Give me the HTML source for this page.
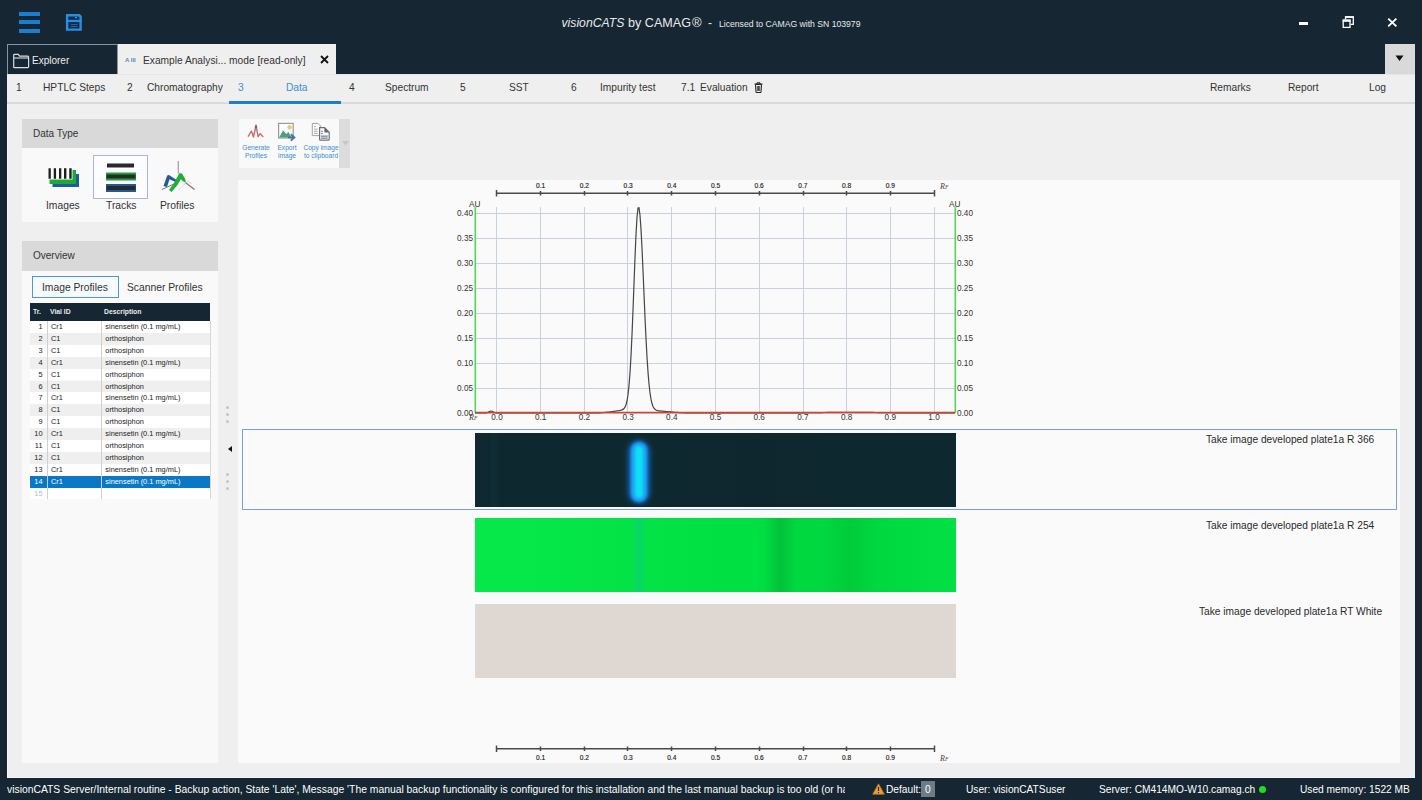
<!DOCTYPE html>
<html><head><meta charset="utf-8">
<style>
*{box-sizing:border-box;margin:0;padding:0}
html,body{width:1422px;height:800px;overflow:hidden;background:#162632;font-family:"Liberation Sans",sans-serif;color:#333}
.a{position:absolute;white-space:nowrap}
#titlebar{left:0;top:0;width:1422px;height:44px;background:#162632}
#nav{left:7px;top:74px;width:1408px;height:28px;background:#efefef}
#navline{left:7px;top:102px;width:1408px;height:2px;background:#d9d9d9}
#content{left:7px;top:104px;width:1408px;height:674px;background:#efefef}
.nt{font-size:10.2px;color:#333;top:82px;line-height:12px}
.ph{background:#d9d9d9;font-size:10px;color:#333;padding-left:11px;line-height:28px}
.pb{background:#f9f9f9}
.lbl{font-size:10.3px;color:#333;line-height:12px}
.tr{position:absolute;left:30px;width:180px;height:11.9px}
.tr span{position:absolute;font-size:7.4px;line-height:12.6px;color:#222}
.st{font-size:10.2px;color:#fff;top:783px;line-height:13px}
</style></head><body>
<div id="titlebar" class="a"></div>
<!-- hamburger -->
<div class="a" style="left:19px;top:12px;width:21px;height:4px;background:#1a7fd0"></div>
<div class="a" style="left:19px;top:20.3px;width:21px;height:4px;background:#1a7fd0"></div>
<div class="a" style="left:19px;top:28.6px;width:21px;height:4px;background:#1a7fd0"></div>
<!-- save icon -->
<svg class="a" style="left:62px;top:10px" width="26" height="26" viewBox="62 10 26 26"><path d="M67.1 15.3H79.3L80.6 16.6V29.6H67.1Z" fill="#0e2a4e" stroke="#2a8ee0" stroke-width="2.4"/><path d="M66 20.9H81.8" stroke="#2a8ee0" stroke-width="2.2"/><circle cx="76" cy="17.6" r="0.9" fill="#50b0c0"/><path d="M70.8 24.6H77.6M70.8 26.6H77.6" stroke="#2f6aa8" stroke-width="0.9"/></svg>
<!-- title -->
<div class="a" style="left:561.5px;top:15px;font-size:12.2px;color:#e6eaee;line-height:16px;font-style:italic">visionCATS</div>
<div class="a" style="left:628px;top:15px;font-size:12.6px;color:#e6eaee;line-height:16px">by CAMAG</div>
<div class="a" style="left:692px;top:14.5px;font-size:13px;color:#e6eaee;line-height:16px">®</div>
<div class="a" style="left:708px;top:15px;font-size:12px;color:#e6eaee;line-height:16px">-</div>
<div class="a" style="left:719px;top:16px;font-size:8.65px;color:#e6eaee;line-height:17px">Licensed to CAMAG with SN 103979</div>
<!-- window controls -->
<div class="a" style="left:1299px;top:22px;width:9px;height:3px;background:#fff"></div>
<svg class="a" style="left:1340px;top:14px" width="16" height="16" viewBox="1340 14 16 16"><path d="M1345.5 19.5V17H1353.3V24.3H1350.8" fill="none" stroke="#fff" stroke-width="1.3"/><rect x="1345" y="16.3" width="8.8" height="1.6" fill="#fff"/><rect x="1343.2" y="20.2" width="6.8" height="7.2" fill="none" stroke="#fff" stroke-width="1.3"/><rect x="1342.6" y="19.6" width="8" height="2.2" fill="#fff"/></svg>
<svg class="a" style="left:1386px;top:17px" width="12" height="11" viewBox="0 0 12 11"><path d="M2.2 1.6L10.4 9.4M10.4 1.6L2.2 9.4" stroke="#fff" stroke-width="1.9"/></svg>

<!-- tabs -->
<div class="a" style="left:7px;top:44px;width:111px;height:30px;border:1px solid #8a949c;border-bottom:none;background:#162632"></div>
<svg class="a" style="left:12px;top:53px" width="18" height="16" viewBox="0 0 18 16"><path d="M1.7 14.2V2.2Q1.7 1.3 2.6 1.3H6.2L7.6 3.2H15.6Q16.6 3.2 16.6 4.2V13.8Q16.6 14.6 15.7 14.6H2.2Q1.7 14.6 1.7 14.2Z" fill="none" stroke="#d8dde2" stroke-width="1.2"/><path d="M1.7 5H16.6" stroke="#d8dde2" stroke-width="1.1"/></svg>
<div class="a" style="left:32px;top:54px;font-size:10px;color:#f0f0f0;line-height:13px">Explorer</div>
<div class="a" style="left:118px;top:44px;width:218px;height:30px;background:#efefef"></div>
<div class="a" style="left:125px;top:57px;font-size:6px;color:#5a86bf;font-weight:bold;line-height:7px;letter-spacing:0px">A III</div>
<div class="a" style="left:143px;top:54px;font-size:10.2px;color:#333;line-height:13px">Example Analysi... mode [read-only]</div>
<svg class="a" style="left:320px;top:55px" width="9" height="9" viewBox="0 0 9 9"><path d="M1 1L8 8M8 1L1 8" stroke="#111" stroke-width="1.8"/></svg>
<div class="a" style="left:1385px;top:44px;width:30px;height:30px;background:#d9d9d9"></div>
<svg class="a" style="left:1395px;top:55px" width="9" height="7" viewBox="0 0 9 7"><path d="M0.5 0.5h8L4.5 6z" fill="#111"/></svg>

<!-- nav -->
<div id="nav" class="a"></div>
<div id="navline" class="a"></div>
<div class="a" style="left:7px;top:74px;width:1408px;height:1px;background:#e3e7ec"></div>
<div class="a nt" style="left:16px">1</div>
<div class="a nt" style="left:43px">HPTLC Steps</div>
<div class="a nt" style="left:127px">2</div>
<div class="a nt" style="left:147px">Chromatography</div>
<div class="a nt" style="left:238px;color:#3c8fd0">3</div>
<div class="a nt" style="left:286px;color:#3c8fd0">Data</div>
<div class="a" style="left:229px;top:101px;width:112px;height:3px;background:#1a7fd0"></div>
<div class="a nt" style="left:349px">4</div>
<div class="a nt" style="left:385px">Spectrum</div>
<div class="a nt" style="left:460px">5</div>
<div class="a nt" style="left:509px">SST</div>
<div class="a nt" style="left:571px">6</div>
<div class="a nt" style="left:600px">Impurity test</div>
<div class="a nt" style="left:681px">7.1</div>
<div class="a nt" style="left:700px">Evaluation</div>
<svg class="a" style="left:754px;top:82px" width="9" height="11" viewBox="0 0 9 11"><path d="M0.5 2h8M3 2V0.8h3V2M1.5 2.5h6l-0.5 8h-5z" fill="none" stroke="#222" stroke-width="1"/><path d="M3.3 4v5M4.5 4v5M5.7 4v5" stroke="#222" stroke-width="0.8"/></svg>
<div class="a nt" style="left:1210px">Remarks</div>
<div class="a nt" style="left:1288px">Report</div>
<div class="a nt" style="left:1369px">Log</div>

<!-- content -->
<div id="content" class="a"></div>
<div class="a" style="left:7px;top:104px;width:1px;height:674px;background:#f8f8f8"></div>
<div class="a" style="left:7px;top:777px;width:1408px;height:1px;background:#f6f6f6"></div>

<!-- left panel: Data Type -->
<div class="a ph" style="left:22px;top:119px;width:196px;height:29px;line-height:29px">Data Type</div>
<div class="a pb" style="left:22px;top:148px;width:196px;height:74px"></div>
<div class="a" style="left:93px;top:155px;width:55px;height:44px;border:1px solid #aab4dc;background:#fdfdff"></div>
<svg class="a" style="left:47px;top:166px" width="34" height="23" viewBox="0 0 34 23">
<rect x="5.5" y="8" width="26.5" height="13" fill="#1f5a9a"/>
<rect x="2.5" y="4" width="26.5" height="14" fill="#1fa83a"/>
<rect x="1" y="1" width="24.5" height="12.5" fill="#fafafa"/>
<g fill="#1e1e1e"><rect x="1.5" y="2.25" width="2.3" height="10.5"/><rect x="6.75" y="2.25" width="2.3" height="10.5"/><rect x="12" y="2.25" width="2.3" height="10.5"/><rect x="17" y="2.25" width="2.4" height="10.5"/><rect x="22.25" y="2.25" width="2.4" height="10.5"/></g>
</svg>
<svg class="a" style="left:106px;top:163px" width="30" height="30" viewBox="0 0 30 30">
<rect x="1" y="0.5" width="27" height="4" fill="#2a2a2a"/>
<rect x="0" y="9.5" width="30" height="8" fill="#1fa23a"/>
<rect x="0.5" y="11.5" width="29" height="4" fill="#2a2a2a"/>
<rect x="0" y="21" width="30" height="8" fill="#1f5a9a"/>
<rect x="0.5" y="23" width="29" height="4" fill="#2a2a2a"/>
</svg>
<svg class="a" style="left:155px;top:155px" width="50" height="40" viewBox="0 0 50 40">
<path d="M23.25 6V18.5" stroke="#8e8e8e" stroke-width="1"/>
<path d="M7 34.5L21 28" stroke="#7a7a7a" stroke-width="1"/>
<path d="M23.5 35L29 29.5L33 26.5L36.5 28.5" fill="none" stroke="#cfcfcf" stroke-width="0.9"/>
<path d="M31 28L39.5 34.5" stroke="#9a6a6a" stroke-width="1.2"/>
<path d="M8.5 31L12 32L14.5 24.2L20 26.8L21.6 25L14 20L12.2 20.6Z" fill="#1f5a9a"/>
<path d="M14 35L16.5 37L22.5 30L25.8 24.3L28 26.2L31 28L30 23.5L27 18.5L24.5 18L22 22.5L19 28Z" fill="#1fae3a"/>
</svg>
<div class="a lbl" style="left:46px;top:200px">Images</div>
<div class="a lbl" style="left:106px;top:200px">Tracks</div>
<div class="a lbl" style="left:160px;top:200px">Profiles</div>

<!-- Overview -->
<div class="a ph" style="left:22px;top:241px;width:196px;height:30px;line-height:29px">Overview</div>
<div class="a pb" style="left:22px;top:271px;width:196px;height:492px"></div>
<div class="a" style="left:32px;top:276px;width:87px;height:22px;border:1px solid #4a98d8;background:#f6fafd"></div>
<div class="a lbl" style="left:42px;top:282px">Image Profiles</div>
<div class="a lbl" style="left:127px;top:282px">Scanner Profiles</div>
<div class="a" style="left:30px;top:303px;width:180px;height:18px;background:#162632"></div>
<div class="a" style="left:33px;top:303px;font-size:6.8px;font-weight:bold;color:#e8ecef;line-height:18px">Tr.</div>
<div class="a" style="left:50px;top:303px;font-size:6.8px;font-weight:bold;color:#e8ecef;line-height:18px">Vial ID</div>
<div class="a" style="left:104px;top:303px;font-size:6.8px;font-weight:bold;color:#e8ecef;line-height:18px">Description</div>
<div class="tr" style="top:321.00px;background:#ffffff"><span style="right:167.5px;color:#222">1</span><span style="left:21px;color:#222">Cr1</span><span style="left:75.3px;color:#222">sinensetin (0.1 mg/mL)</span></div>
<div class="tr" style="top:332.90px;background:#efefef"><span style="right:167.5px;color:#222">2</span><span style="left:21px;color:#222">C1</span><span style="left:75.3px;color:#222">orthosiphon</span></div>
<div class="tr" style="top:344.80px;background:#ffffff"><span style="right:167.5px;color:#222">3</span><span style="left:21px;color:#222">C1</span><span style="left:75.3px;color:#222">orthosiphon</span></div>
<div class="tr" style="top:356.70px;background:#efefef"><span style="right:167.5px;color:#222">4</span><span style="left:21px;color:#222">Cr1</span><span style="left:75.3px;color:#222">sinensetin (0.1 mg/mL)</span></div>
<div class="tr" style="top:368.60px;background:#ffffff"><span style="right:167.5px;color:#222">5</span><span style="left:21px;color:#222">C1</span><span style="left:75.3px;color:#222">orthosiphon</span></div>
<div class="tr" style="top:380.50px;background:#efefef"><span style="right:167.5px;color:#222">6</span><span style="left:21px;color:#222">C1</span><span style="left:75.3px;color:#222">orthosiphon</span></div>
<div class="tr" style="top:392.40px;background:#ffffff"><span style="right:167.5px;color:#222">7</span><span style="left:21px;color:#222">Cr1</span><span style="left:75.3px;color:#222">sinensetin (0.1 mg/mL)</span></div>
<div class="tr" style="top:404.30px;background:#efefef"><span style="right:167.5px;color:#222">8</span><span style="left:21px;color:#222">C1</span><span style="left:75.3px;color:#222">orthosiphon</span></div>
<div class="tr" style="top:416.20px;background:#ffffff"><span style="right:167.5px;color:#222">9</span><span style="left:21px;color:#222">C1</span><span style="left:75.3px;color:#222">orthosiphon</span></div>
<div class="tr" style="top:428.10px;background:#efefef"><span style="right:167.5px;color:#222">10</span><span style="left:21px;color:#222">Cr1</span><span style="left:75.3px;color:#222">sinensetin (0.1 mg/mL)</span></div>
<div class="tr" style="top:440.00px;background:#ffffff"><span style="right:167.5px;color:#222">11</span><span style="left:21px;color:#222">C1</span><span style="left:75.3px;color:#222">orthosiphon</span></div>
<div class="tr" style="top:451.90px;background:#efefef"><span style="right:167.5px;color:#222">12</span><span style="left:21px;color:#222">C1</span><span style="left:75.3px;color:#222">orthosiphon</span></div>
<div class="tr" style="top:463.80px;background:#ffffff"><span style="right:167.5px;color:#222">13</span><span style="left:21px;color:#222">Cr1</span><span style="left:75.3px;color:#222">sinensetin (0.1 mg/mL)</span></div>
<div class="tr" style="top:475.70px;background:#0a78c4"><span style="right:167.5px;color:#fff">14</span><span style="left:21px;color:#fff">Cr1</span><span style="left:75.3px;color:#fff">sinensetin (0.1 mg/mL)</span></div>
<div class="tr" style="top:487.60px;background:#ffffff"><span style="right:167.5px;color:#bbb">15</span><span style="left:21px;color:#bbb"></span><span style="left:75.3px;color:#bbb"></span></div>
<div class="a" style="left:47px;top:321px;width:1px;height:178px;background:#d0d0d0"></div>
<div class="a" style="left:101px;top:321px;width:1px;height:178px;background:#d0d0d0"></div>
<div class="a" style="left:210px;top:321px;width:1px;height:178px;background:#d8d8d8"></div>

<!-- splitter -->
<div class="a" style="left:226px;top:406px;width:3px;height:3px;border-radius:50%;background:#c4c4c4"></div>
<div class="a" style="left:226px;top:413px;width:3px;height:3px;border-radius:50%;background:#c4c4c4"></div>
<div class="a" style="left:226px;top:420px;width:3px;height:3px;border-radius:50%;background:#c4c4c4"></div>
<svg class="a" style="left:227.5px;top:445.5px" width="4" height="6" viewBox="0 0 4 6"><path d="M4 0v6L0 3z" fill="#111"/></svg>
<div class="a" style="left:226px;top:473px;width:3px;height:3px;border-radius:50%;background:#c4c4c4"></div>
<div class="a" style="left:226px;top:480px;width:3px;height:3px;border-radius:50%;background:#c4c4c4"></div>
<div class="a" style="left:226px;top:487px;width:3px;height:3px;border-radius:50%;background:#c4c4c4"></div>

<!-- CHART -->
<div class="a" style="left:239px;top:119px;width:100px;height:49px;background:#f9f9f9"></div>
<div class="a" style="left:339px;top:119px;width:11px;height:49px;background:#dcdcdc"></div>
<svg class="a" style="left:341.5px;top:141px" width="7" height="5" viewBox="0 0 7 5"><path d="M0 0h7L3.5 4.5z" fill="#c6c6c6"/></svg>
<div class="a" style="left:238px;top:180px;width:1162px;height:583px;background:#fafafa"></div>
<svg class="a" style="left:0;top:0" width="1422" height="800" viewBox="0 0 1422 800">
<path d="M496.5 207V413 M540.5 207V413 M584.5 207V413 M627.5 207V413 M671.5 207V413 M715.5 207V413 M759.5 207V413 M803.5 207V413 M846.5 207V413 M890.5 207V413 M934.5 207V413 M475 213.5H955 M475 238.5H955 M475 263.5H955 M475 288.5H955 M475 313.5H955 M475 338.5H955 M475 363.5H955 M475 388.5H955 M475 413.5H955" stroke="#c9d1dc" stroke-width="1" fill="none"/>
<path d="M475.3 207V413M955.3 207V413" stroke="#50d850" stroke-width="1.6"/>
<polyline points="475,413.00 476,413.00 477,413.00 478,413.00 479,413.00 480,413.00 481,413.00 482,413.00 483,413.00 484,412.99 485,412.96 486,412.88 487,412.66 488,412.26 489,411.72 490,411.21 491,411.00 492,411.21 493,411.72 494,412.26 495,412.66 496,412.88 497,412.96 498,412.99 499,413.00 500,413.00 501,413.00 502,413.00 503,413.00 504,413.00 505,413.00 506,413.00 507,413.00 508,413.00 509,413.00 510,413.00 511,413.00 512,413.00 513,413.00 514,413.00 515,413.00 516,413.00 517,413.00 518,413.00 519,413.00 520,413.00 521,413.00 522,413.00 523,413.00 524,413.00 525,413.00 526,413.00 527,413.00 528,413.00 529,413.00 530,413.00 531,413.00 532,413.00 533,413.00 534,413.00 535,413.00 536,413.00 537,413.00 538,413.00 539,413.00 540,413.00 541,413.00 542,413.00 543,413.00 544,413.00 545,413.00 546,413.00 547,413.00 548,413.00 549,413.00 550,413.00 551,413.00 552,413.00 553,413.00 554,413.00 555,413.00 556,413.00 557,413.00 558,413.00 559,413.00 560,413.00 561,413.00 562,413.00 563,413.00 564,413.00 565,413.00 566,413.00 567,413.00 568,413.00 569,413.00 570,413.00 571,413.00 572,413.00 573,413.00 574,413.00 575,413.00 576,413.00 577,413.00 578,413.00 579,413.00 580,413.00 581,413.00 582,413.00 583,412.99 584,412.99 585,412.99 586,412.99 587,412.98 588,412.98 589,412.97 590,412.97 591,412.96 592,412.94 593,412.93 594,412.92 595,412.90 596,412.87 597,412.85 598,412.81 599,412.78 600,412.73 601,412.68 602,412.63 603,412.56 604,412.49 605,412.41 606,412.32 607,412.22 608,412.12 609,412.01 610,411.88 611,411.75 612,411.62 613,411.48 614,411.33 615,411.18 616,411.03 617,410.88 618,410.72 619,410.56 620,410.38 621,410.16 622,409.86 623,409.37 624,408.55 625,407.13 626,404.73 627,400.81 628,394.68 629,385.58 630,372.80 631,355.87 632,334.81 633,310.30 634,283.85 635,257.71 636,234.60 637,217.28 638,208.02 639,207.82 640,215.21 641,229.15 642,248.20 643,270.51 644,294.13 645,317.27 646,338.52 647,356.94 648,372.10 649,383.97 650,392.85 651,399.20 652,403.56 653,406.42 654,408.24 655,409.36 656,410.03 657,410.43 658,410.68 659,410.84 660,410.95 661,411.05 662,411.14 663,411.22 664,411.31 665,411.40 666,411.49 667,411.58 668,411.67 669,411.76 670,411.85 671,411.94 672,412.02 673,412.10 674,412.18 675,412.26 676,412.33 677,412.40 678,412.47 679,412.53 680,412.58 681,412.63 682,412.68 683,412.72 684,412.76 685,412.79 686,412.82 687,412.85 688,412.87 689,412.89 690,412.91 691,412.92 692,412.93 693,412.95 694,412.96 695,412.96 696,412.97 697,412.98 698,412.98 699,412.98 700,412.99 701,412.99 702,412.99 703,412.99 704,413.00 705,413.00 706,413.00 707,413.00 708,413.00 709,413.00 710,413.00 711,413.00 712,413.00 713,413.00 714,413.00 715,413.00 716,413.00 717,413.00 718,413.00 719,413.00 720,413.00 721,413.00 722,413.00 723,413.00 724,413.00 725,413.00 726,413.00 727,413.00 728,413.00 729,413.00 730,413.00 731,413.00 732,413.00 733,413.00 734,413.00 735,413.00 736,413.00 737,413.00 738,413.00 739,413.00 740,413.00 741,413.00 742,413.00 743,413.00 744,413.00 745,413.00 746,413.00 747,413.00 748,413.00 749,413.00 750,413.00 751,413.00 752,413.00 753,413.00 754,413.00 755,413.00 756,413.00 757,413.00 758,413.00 759,413.00 760,413.00 761,412.99 762,412.99 763,412.99 764,412.99 765,412.99 766,412.99 767,412.99 768,412.99 769,412.99 770,412.99 771,412.98 772,412.98 773,412.98 774,412.98 775,412.98 776,412.98 777,412.97 778,412.97 779,412.97 780,412.96 781,412.96 782,412.96 783,412.95 784,412.95 785,412.95 786,412.94 787,412.94 788,412.93 789,412.93 790,412.92 791,412.91 792,412.91 793,412.90 794,412.89 795,412.89 796,412.88 797,412.87 798,412.86 799,412.85 800,412.84 801,412.83 802,412.82 803,412.81 804,412.80 805,412.79 806,412.78 807,412.76 808,412.75 809,412.74 810,412.72 811,412.71 812,412.70 813,412.68 814,412.67 815,412.65 816,412.64 817,412.62 818,412.60 819,412.59 820,412.57 821,412.56 822,412.54 823,412.52 824,412.51 825,412.49 826,412.48 827,412.46 828,412.45 829,412.43 830,412.42 831,412.40 832,412.39 833,412.37 834,412.36 835,412.35 836,412.34 837,412.33 838,412.31 839,412.30 840,412.30 841,412.29 842,412.28 843,412.27 844,412.27 845,412.26 846,412.26 847,412.25 848,412.25 849,412.25 850,412.25 851,412.25 852,412.25 853,412.25 854,412.26 855,412.26 856,412.27 857,412.27 858,412.28 859,412.29 860,412.30 861,412.30 862,412.31 863,412.33 864,412.34 865,412.35 866,412.36 867,412.37 868,412.39 869,412.40 870,412.42 871,412.43 872,412.45 873,412.46 874,412.48 875,412.49 876,412.51 877,412.52 878,412.54 879,412.56 880,412.57 881,412.59 882,412.60 883,412.62 884,412.64 885,412.65 886,412.67 887,412.68 888,412.70 889,412.71 890,412.72 891,412.74 892,412.75 893,412.76 894,412.78 895,412.79 896,412.80 897,412.81 898,412.82 899,412.83 900,412.84 901,412.85 902,412.86 903,412.87 904,412.88 905,412.89 906,412.89 907,412.90 908,412.91 909,412.91 910,412.92 911,412.93 912,412.93 913,412.94 914,412.94 915,412.95 916,412.95 917,412.95 918,412.96 919,412.96 920,412.96 921,412.97 922,412.97 923,412.97 924,412.98 925,412.98 926,412.98 927,412.98 928,412.98 929,412.98 930,412.99 931,412.99 932,412.99 933,412.99 934,412.99 935,412.99 936,412.99 937,412.99 938,412.99 939,412.99 940,413.00 941,413.00 942,413.00 943,413.00 944,413.00 945,413.00 946,413.00 947,413.00 948,413.00 949,413.00 950,413.00 951,413.00 952,413.00 953,413.00 954,413.00 955,413.00" fill="none" stroke="#454545" stroke-width="1.2"/>
<path d="M475 412.5H955" stroke="#e03a2a" stroke-width="1.6"/>
<path d="M496.5 193.2H934.5 M496.5 190.0V196.4 M540.5 191.0V195.4 M584.5 191.0V195.4 M627.5 191.0V195.4 M671.5 191.0V195.4 M715.5 191.0V195.4 M759.5 191.0V195.4 M803.5 191.0V195.4 M846.5 191.0V195.4 M890.5 191.0V195.4 M934.5 190.0V196.4" stroke="#4a4a4a" stroke-width="1.5" fill="none"/>
<path d="M496.5 748.8H934.5 M496.5 745.6V752.0 M540.5 746.6V751.0 M584.5 746.6V751.0 M627.5 746.6V751.0 M671.5 746.6V751.0 M715.5 746.6V751.0 M759.5 746.6V751.0 M803.5 746.6V751.0 M846.5 746.6V751.0 M890.5 746.6V751.0 M934.5 745.6V752.0" stroke="#4a4a4a" stroke-width="1.5" fill="none"/>
<g font-family="Liberation Sans" font-size="6.6" fill="#222" stroke="#222" stroke-width="0.15" text-anchor="middle">
<text x="540.7" y="188">0.1</text>
<text x="540.7" y="760">0.1</text>
<text x="584.4" y="188">0.2</text>
<text x="584.4" y="760">0.2</text>
<text x="628.1" y="188">0.3</text>
<text x="628.1" y="760">0.3</text>
<text x="671.8" y="188">0.4</text>
<text x="671.8" y="760">0.4</text>
<text x="715.5" y="188">0.5</text>
<text x="715.5" y="760">0.5</text>
<text x="759.2" y="188">0.6</text>
<text x="759.2" y="760">0.6</text>
<text x="802.9" y="188">0.7</text>
<text x="802.9" y="760">0.7</text>
<text x="846.6" y="188">0.8</text>
<text x="846.6" y="760">0.8</text>
<text x="890.3" y="188">0.9</text>
<text x="890.3" y="760">0.9</text>
</g>
<g font-family="Liberation Serif" font-style="italic" font-size="8" fill="#444"><text x="940" y="189">R<tspan font-size="5.5">F</tspan></text><text x="940" y="761">R<tspan font-size="5.5">F</tspan></text><text x="469" y="420">R<tspan font-size="5.5">F</tspan></text></g>
<g font-family="Liberation Sans" font-size="8.2" fill="#333">
<text x="473" y="416.0" text-anchor="end">0.00</text>
<text x="957" y="416.0">0.00</text>
<text x="473" y="391.0" text-anchor="end">0.05</text>
<text x="957" y="391.0">0.05</text>
<text x="473" y="366.0" text-anchor="end">0.10</text>
<text x="957" y="366.0">0.10</text>
<text x="473" y="341.0" text-anchor="end">0.15</text>
<text x="957" y="341.0">0.15</text>
<text x="473" y="316.0" text-anchor="end">0.20</text>
<text x="957" y="316.0">0.20</text>
<text x="473" y="291.0" text-anchor="end">0.25</text>
<text x="957" y="291.0">0.25</text>
<text x="473" y="266.0" text-anchor="end">0.30</text>
<text x="957" y="266.0">0.30</text>
<text x="473" y="241.0" text-anchor="end">0.35</text>
<text x="957" y="241.0">0.35</text>
<text x="473" y="216.0" text-anchor="end">0.40</text>
<text x="957" y="216.0">0.40</text>
<text x="469" y="206.5">AU</text><text x="949" y="206.5">AU</text>
<text x="497.0" y="420" text-anchor="middle">0.0</text>
<text x="540.7" y="420" text-anchor="middle">0.1</text>
<text x="584.4" y="420" text-anchor="middle">0.2</text>
<text x="628.1" y="420" text-anchor="middle">0.3</text>
<text x="671.8" y="420" text-anchor="middle">0.4</text>
<text x="715.5" y="420" text-anchor="middle">0.5</text>
<text x="759.2" y="420" text-anchor="middle">0.6</text>
<text x="802.9" y="420" text-anchor="middle">0.7</text>
<text x="846.6" y="420" text-anchor="middle">0.8</text>
<text x="890.3" y="420" text-anchor="middle">0.9</text>
<text x="934.0" y="420" text-anchor="middle">1.0</text>
</g>
<defs>
<linearGradient id="dk" x1="0" x2="1" y1="0" y2="0">
<stop offset="0" stop-color="#10292f"/><stop offset="0.03" stop-color="#0e2830"/><stop offset="0.037" stop-color="#0f2b34"/><stop offset="0.045" stop-color="#0f2b34"/><stop offset="0.052" stop-color="#0e2830"/><stop offset="0.3" stop-color="#0e2830"/><stop offset="0.6" stop-color="#0e272e"/><stop offset="0.8" stop-color="#0e2830"/><stop offset="1" stop-color="#0e2830"/>
</linearGradient>
<linearGradient id="gr" x1="0" x2="1" y1="0" y2="0">
<stop offset="0" stop-color="#07e84a"/><stop offset="0.325" stop-color="#03e346"/><stop offset="0.341" stop-color="#08d66a"/><stop offset="0.357" stop-color="#03e346"/>
<stop offset="0.6" stop-color="#00df42"/><stop offset="0.635" stop-color="#02c23a"/><stop offset="0.67" stop-color="#00d940"/><stop offset="0.72" stop-color="#00d740"/><stop offset="0.78" stop-color="#00cc3a"/><stop offset="0.84" stop-color="#00d840"/><stop offset="1" stop-color="#02e045"/>
</linearGradient>
<filter id="bl" x="-3" y="-1" width="7" height="3"><feGaussianBlur stdDeviation="3"/></filter>
<filter id="bl2" x="-3" y="-1" width="7" height="3"><feGaussianBlur stdDeviation="1.8"/></filter>
</defs>
<rect x="242.5" y="429.5" width="1154" height="80" fill="none" stroke="#7a9ee0" stroke-width="1"/>
<rect x="475" y="433" width="481" height="74" fill="url(#dk)"/>
<rect x="629" y="441" width="20" height="62" rx="10" fill="#1a80f0" opacity="0.85" filter="url(#bl)"/><rect x="631" y="442" width="16" height="60" rx="8" fill="#1aa0ff" filter="url(#bl2)"/><rect x="635" y="446" width="8" height="52" rx="4" fill="#10e0f0" filter="url(#bl2)"/>

<rect x="475" y="518" width="481" height="74" fill="url(#gr)"/>
<rect x="475" y="604" width="481" height="74" fill="#dfd8d2"/>
</svg>
<div class="a" style="left:1206px;top:432.5px;font-size:10.2px;color:#2a2a2a;line-height:13px">Take image developed plate1a R 366</div>
<div class="a" style="left:1206px;top:518.5px;font-size:10.2px;color:#2a2a2a;line-height:13px">Take image developed plate1a R 254</div>
<div class="a" style="left:1199px;top:604.5px;font-size:10.2px;color:#2a2a2a;line-height:13px">Take image developed plate1a RT White</div>
<svg class="a" style="left:240px;top:118px" width="100" height="30" viewBox="240 118 100 30">
<path d="M248 136.6L251.4 131L253.5 137L256 125.6L258.1 136.6L260.2 133.6L263.2 137" fill="none" stroke="#c07070" stroke-width="1.4" stroke-linejoin="round"/>
<path d="M255.2 128L256 125.6L256.8 128" fill="none" stroke="#8a5a5a" stroke-width="1.2"/>
<rect x="278.6" y="123.4" width="14.6" height="14.6" fill="#fdfdfd" stroke="#9a9a9a" stroke-width="1.2"/>
<circle cx="289.6" cy="127.2" r="2.2" fill="#e6cc6a"/>
<path d="M279.2 137.4L283 130.2L286.2 134L288.5 132L291.5 137.4Z" fill="#4e9e82"/>
<path d="M288 137.4H293M290.8 134.2L294.4 137.4L290.8 140.6" fill="none" stroke="#4c72a4" stroke-width="1.9"/>
<path d="M312.3 123.4H318L320.4 125.8V135.6H312.3Z" fill="#fafafa" stroke="#a4a4a4" stroke-width="1"/>
<path d="M314 126.6H316M314 129.2H317.6M314 131.3H317.6M314 133.4H317.6" stroke="#8a9aaa" stroke-width="0.8"/>
<path d="M319.6 127.6H324.6L329.2 132.2V139.2Q329.2 140.2 328.2 140.2H320.6Q319.6 140.2 319.6 139.2Z" fill="#fbfdff" stroke="#6e6e6e" stroke-width="1.2"/>
<path d="M324.4 127.6L329.2 132.4H324.4Z" fill="#5a6a72"/>
<rect x="320.6" y="134.8" width="7.6" height="4.4" fill="#d4e2ee"/>
<path d="M321 131.3H323M321 133.4H323M321 136.2H327.6M321 138.2H327.6" stroke="#556" stroke-width="0.7"/>
</svg>
<div class="a" style="left:226px;width:60px;top:144px;font-size:6.6px;color:#3c8fd0;line-height:7.5px;text-align:center">Generate<br>Profiles</div>
<div class="a" style="left:257px;width:60px;top:144px;font-size:6.6px;color:#3c8fd0;line-height:7.5px;text-align:center">Export<br>image</div>
<div class="a" style="left:291px;width:60px;top:144px;font-size:6.6px;color:#3c8fd0;line-height:7.5px;text-align:center">Copy image<br>to clipboard</div>
<!-- /CHART -->
<!-- status bar -->
<svg class="a" style="left:872px;top:783px" width="13" height="12" viewBox="0 0 13 12"><path d="M6.5 0.8L12.3 11.2H0.7z" fill="#e8a030" stroke="#c07818" stroke-width="0.8"/><path d="M6.5 4v4" stroke="#3a2a10" stroke-width="1.3"/><circle cx="6.5" cy="9.6" r="0.7" fill="#3a2a10"/></svg>
<div class="a st" style="left:886px">Default:</div>
<div class="a" style="left:921px;top:781px;width:14px;height:16px;background:#6e7c88"></div>
<div class="a st" style="left:925px">0</div>
<div class="a st" style="left:966px">User: visionCATSuser</div>
<div class="a st" style="left:1099px">Server: CM414MO-W10.camag.ch</div>
<div class="a" style="left:1259px;top:786px;width:7px;height:7px;border-radius:50%;background:#22dd22"></div>
<div class="a st" style="left:1300px">Used memory: 1522 MB</div>
<div class="a" style="left:7px;top:778px;width:838px;height:22px;overflow:hidden"><div class="a st" style="left:0;top:5px;font-size:10.35px">visionCATS Server/Internal routine - Backup action, State 'Late', Message 'The manual backup functionality is configured for this installation and the last manual backup is too old (or ha</div></div>
</body></html>
